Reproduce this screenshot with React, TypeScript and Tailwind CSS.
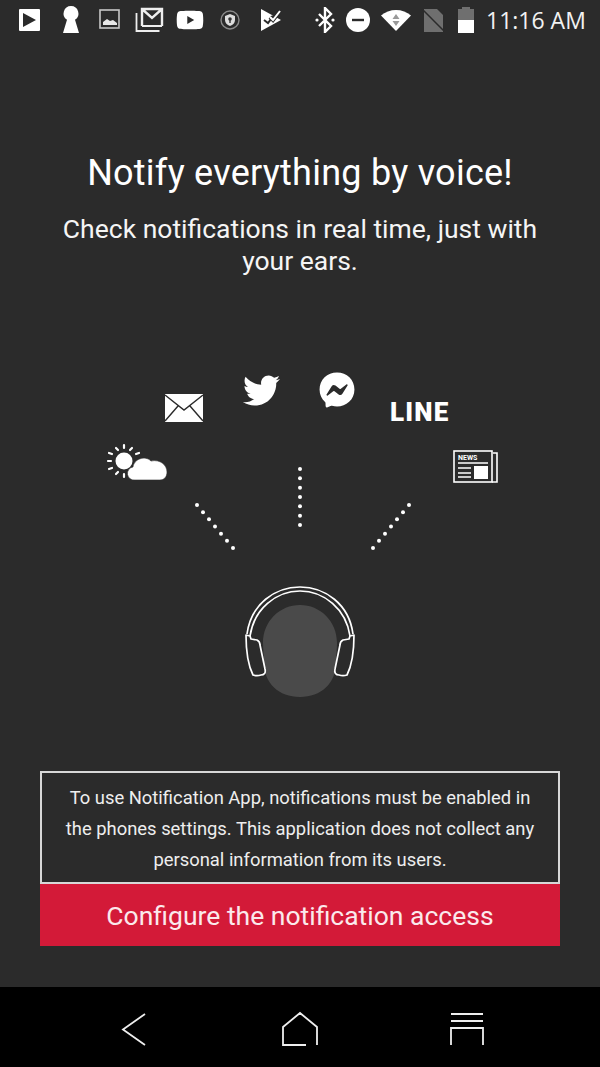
import { FaTwitter, FaFacebookMessenger, FaYoutube } from "react-icons/fa";

function StatusLeft() {
  return (
    <div className="flex items-center">
      {/* play store */}
      <svg width="24" height="24" viewBox="0 0 24 24" className="ml-[17px]">
        <path fill="#fff" fillRule="evenodd" d="M3 1h19a1 1 0 0 1 1 1v20a1 1 0 0 1-1 1H3a1 1 0 0 1-1-1V2a1 1 0 0 1 1-1zM6 5v14l13-7z" />
      </svg>
      {/* keyhole */}
      <svg width="18" height="28" viewBox="0 0 18 28" className="ml-[21px]">
        <path fill="#fff" d="M9 0a7.500 7.500 0 0 1 4 13.800L17 27H1l4-13.200A7.500 7.500 0 0 1 9 0z" />
      </svg>
      {/* picture */}
      <svg width="22" height="22" viewBox="0 0 22 22" className="ml-[19px]">
        <rect x="1" y="1" width="19" height="18" fill="none" stroke="#c8c8c8" strokeWidth="1.6" />
        <path fill="#e8e8e8" d="M4 16v-3l4-3 3 2 3-1 4 3v2z" />
      </svg>
      {/* gmail */}
      <svg width="30" height="26" viewBox="0 0 30 26" className="ml-[14px]">
        <path fill="none" stroke="#eee" strokeWidth="1.8" d="M1.500 6v18h23" />
        <path fill="none" stroke="#eee" strokeWidth="2.400" d="M7 19V2h20v17M7 2l10 9 10-9" />
        <path fill="none" stroke="#eee" strokeWidth="2" d="M7 19h20" />
      </svg>
      <FaYoutube className="ml-[11px] text-white" size={28} />
      {/* shield in a circle */}
      <svg width="20" height="20" viewBox="0 0 20 20" className="ml-[16px]">
        <circle cx="10" cy="10" r="9" fill="none" stroke="#8a8a8a" strokeWidth="1.4" />
        <path fill="#ddd" d="M10 4l5 2v4c0 3-2 5-5 6-3-1-5-3-5-6V6z" />
        <circle cx="10" cy="9" r="1.8" fill="#333" />
        <rect x="9.300" y="10" width="1.4" height="3" fill="#333" />
      </svg>
      {/* checkmark flag */}
      <svg width="22" height="24" viewBox="0 0 22 24" className="ml-[20px]">
        <path fill="#fff" d="M1 1l20 11L1 23z" />
        <path fill="none" stroke="#2b2b2b" strokeWidth="2" d="M4 12l4 3 6-8" />
        <path fill="none" stroke="#2b2b2b" strokeWidth="4" d="M10 9l3 3 7-9" />
        <path fill="none" stroke="#fff" strokeWidth="2" d="M10 9l3 3 7-9" />
      </svg>
    </div>
  );
}

function StatusRight() {
  return (
    <div className="flex items-center">
      {/* bluetooth */}
      <svg width="20" height="26" viewBox="0 0 20 26">
        <path fill="none" stroke="#fff" strokeWidth="2.400" d="M4 7l12 12-6 6V1l6 6L4 19" />
        <circle cx="2" cy="13" r="1.600" fill="#fff" />
        <circle cx="18" cy="13" r="1.600" fill="#fff" />
      </svg>
      {/* do not disturb */}
      <svg width="24" height="24" viewBox="0 0 24 24" className="ml-[11px]">
        <circle cx="12" cy="12" r="12" fill="#fff" />
        <rect x="6" y="10.800" width="12" height="2.400" fill="#2b2b2b" />
      </svg>
      {/* wifi with data arrows */}
      <svg width="30" height="22" viewBox="0 0 30 22" className="ml-[11px]">
        <path fill="#fff" d="M0 6.500C8-1 22-1 30 6.500L15 22z" />
        <path fill="#999" d="M15 5l3.500 5h-7zM15 17l-3.500-5h7z" />
      </svg>
      {/* no sim */}
      <svg width="24" height="24" viewBox="0 0 24 24" className="ml-[10px]">
        <path fill="#6f6f6f" d="M3 1h13l6 6v17H3z" />
        <path stroke="#2b2b2b" strokeWidth="1.5" d="M0 0l24 24" />
      </svg>
      {/* battery */}
      <svg width="18" height="26" viewBox="0 0 18 26" className="ml-[12px]">
        <path fill="#6f6f6f" d="M5 0h8v2h4v11H1V2h4z" />
        <rect x="1" y="13" width="16" height="13" fill="#fff" />
      </svg>
      <span className="ml-[11px] mr-[14px] w-[100px] font-['Open_Sans',sans-serif] text-[23px] leading-none whitespace-nowrap text-[#f2f2f2]">11:16 AM</span>
    </div>
  );
}

function Dots({ x1, y1, x2, y2 }: { x1: number; y1: number; x2: number; y2: number }) {
  return (
    <>
      {[0, 1, 2, 3, 4, 5, 6].map((i) => (
        <circle key={i} cx={x1 + ((x2 - x1) * i) / 6} cy={y1 + ((y2 - y1) * i) / 6} r="2" fill="#fff" />
      ))}
    </>
  );
}

// all the little service icons around the head
function Illustration() {
  return (
    <svg width="400" height="340" viewBox="100 365 400 340" className="block">
      {/* mail */}
      <rect x="165" y="394" width="38" height="28" fill="#fff" />
      <path fill="none" stroke="#2b2b2b" strokeWidth="1.4" d="M165 395l19 15 19-15M165 421l13-15M203 421l-13-15" />

      <FaTwitter x="243" y="372" size={37} color="#fff" />
      <FaFacebookMessenger x="319" y="372" size={36} color="#fff" />

      <text x="390" y="421" fill="#fff" fontFamily="Roboto, sans-serif" fontSize="26" fontWeight="900" letterSpacing="1.2">LINE</text>

      {/* weather */}
      <circle cx="124" cy="461" r="8.500" fill="#fff" />
      <g stroke="#fff" strokeWidth="2.200" strokeLinecap="round">
        <path d="M124 445v3M124 474v3M108 461h3M132 448l-2 2M116 448l2 2M109 453l3 1M109 469l3-1M116 474l2-2M139 453l-3 1" />
      </g>
      <path fill="#fff" d="M135 480a6.500 6.500 0 0 1-2-13c1-8 12-12 18-6 9-2 16 4 16 11 0 5-3 8-7 8z" stroke="#2b2b2b" strokeWidth="0.600" />

      {/* news */}
      <rect x="454" y="451" width="38" height="31" fill="none" stroke="#fff" strokeWidth="1.600" />
      <path fill="none" stroke="#fff" strokeWidth="1.600" d="M493 453h4v29h-5" />
      <text x="458" y="460" fill="#fff" fontFamily="Roboto, sans-serif" fontSize="7" fontWeight="700">NEWS</text>
      <path stroke="#fff" strokeWidth="1.600" d="M458 463h30M458 468h13M458 473h13M458 477h13" />
      <rect x="474" y="466" width="14" height="13" fill="#fff" />

      <Dots x1={197} y1={505} x2={233} y2={548} />
      <Dots x1={300} y1={469} x2={300} y2={525} />
      <Dots x1={409} y1={505} x2={373} y2={548} />

      {/* head */}
      <path fill="#4a4a4a" d="M300 605c20 0 37 16 37 38 0 6-1 13-1 20 0 20-15 34-36 34s-36-14-36-34c0-7-1-14-1-20 0-22 17-38 37-38z" />

      {/* headphones */}
      <g fill="none" stroke="#fff" strokeWidth="1.700" strokeLinejoin="round">
        <path d="M247 634c4-30 28-47 53-47s49 17 53 47" />
        <path d="M250 636c4-27 26-45 50-45s46 18 50 45" />
        <path d="M246 635l4 1 1 3 6 1c2 1 3 3 3 5l5 24c1 4-1 6-4 6-3 1-5 1-8 0-4-8-7-20-7-40z" />
        <path d="M354 635l-4 1-1 3-6 1c-2 1-3 3-3 5l-5 24c-1 4 1 6 4 6 3 1 5 1 8 0 4-8 7-20 7-40z" />
      </g>
    </svg>
  );
}

export default function App() {
  return (
    <div className="flex h-[1067px] w-[600px] flex-col overflow-hidden bg-[#2b2b2b] font-['Roboto',sans-serif] text-white">
      <div className="flex h-[40px] items-center justify-between">
        <StatusLeft />
        <StatusRight />
      </div>

      <h1 className="mt-[111px] text-center text-[36px] leading-[44px] font-normal tracking-[0.25px] text-white">Notify everything by voice!</h1>
      <p className="mx-auto mt-[18px] w-[500px] text-center text-[26.500px] leading-[32px] text-[#f5f5f5]">
        Check notifications in real time, just with your ears.
      </p>

      <div className="mt-[88px] flex justify-center">
        <Illustration />
      </div>

      <div className="mx-[40px] mt-[66px]">
        <div className="h-[113px] border-2 border-[#d8d8d8] px-[16px] pt-[9px] text-center text-[18.400px] leading-[31px] text-[#eeeeee]">
          To use Notification App, notifications must be enabled in the phones settings. This application does not collect any personal information from its users.
        </div>
        <button className="block h-[62px] w-full bg-[#d31a38] pt-[2px] text-center text-[26.500px] text-[#fbe9ec]">Configure the notification access</button>
      </div>

      <div className="mt-auto flex h-[80px] items-center justify-center bg-black">
        <svg width="420" height="70" viewBox="90 990 420 70" fill="none" stroke="#eeeeee" strokeWidth="1.800">
          <path d="M145 1012l-22 15.500 22 15.500" />
          <path d="M306 1043h-23v-18l17-14 17 14v18" />
          <path d="M451 1012h32M451 1019h32" />
          <path d="M451 1043v-17h32v17" />
        </svg>
      </div>
    </div>
  );
}
